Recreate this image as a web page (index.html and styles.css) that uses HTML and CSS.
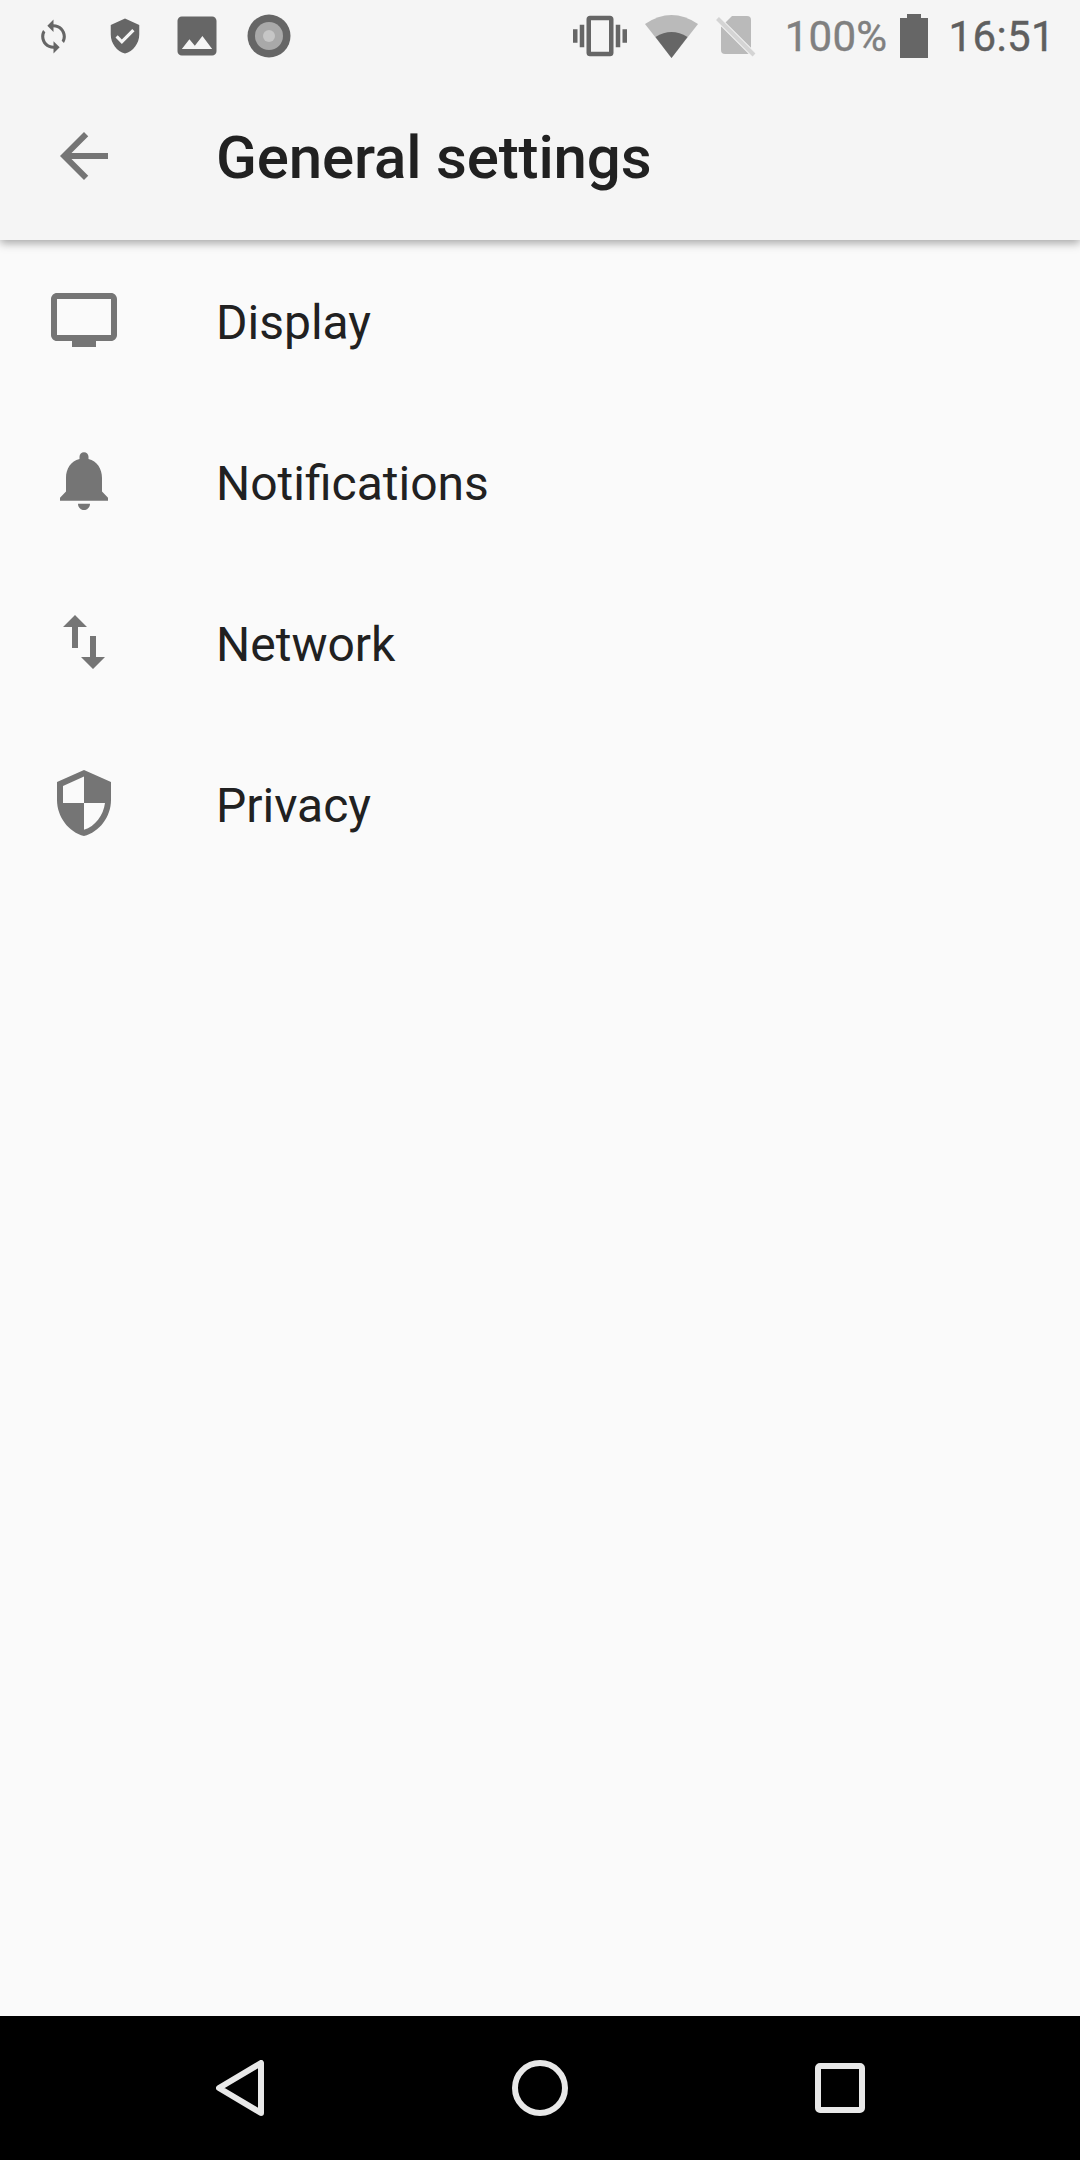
FILE: index.html
```html
<!DOCTYPE html>
<html lang="en">
<head>
    <meta charset="UTF-8">
    <meta name="viewport" content="width=device-width, initial-scale=1.0">
    <title>General settings</title>
    <link rel="stylesheet" href="styles.css">
</head>
<body>
    <div class="phone">
        <div class="appbar">
            <!-- Status bar -->
            <div class="status-bar">
                <div class="status-left">
                    <div class="status-slot">
                        <svg class="sb-sync" viewBox="0 0 24 24"><path d="M12 4V1L8 5l4 4V6c3.31 0 6 2.69 6 6 0 1.01-.25 1.97-.7 2.8l1.46 1.46C19.54 15.03 20 13.57 20 12c0-4.42-3.58-8-8-8zm0 14c-3.31 0-6-2.69-6-6 0-1.01.25-1.97.7-2.8L5.24 7.74C4.46 8.97 4 10.43 4 12c0 4.42 3.58 8 8 8v3l4-4-4-4v3z"/></svg>
                    </div>
                    <div class="status-slot">
                        <svg class="sb-shield" viewBox="0 0 24 24"><path d="M12 1L3 5v6c0 5.55 3.84 10.74 9 12 5.16-1.26 9-6.45 9-12V5l-9-4zm-2 16l-4-4 1.41-1.41L10 14.17l6.59-6.59L18 9l-8 8z"/></svg>
                    </div>
                    <div class="status-slot">
                        <svg class="sb-photo" viewBox="0 0 24 24"><path d="M21 19V5c0-1.1-.9-2-2-2H5c-1.1 0-2 .9-2 2v14c0 1.1.9 2 2 2h14c1.1 0 2-.9 2-2zM8.5 13.5l2.5 3.01L14.5 12l4.5 6H5l3.5-4.5z"/></svg>
                    </div>
                    <div class="status-slot">
                        <svg class="sb-record" viewBox="0 0 44 44">
                            <circle cx="22" cy="22" r="21.5" fill="#666666"/>
                            <circle cx="22" cy="22" r="14" fill="#a9a9a9"/>
                            <circle cx="22" cy="22" r="6" fill="#c6c6c6"/>
                        </svg>
                    </div>
                </div>
                <div class="status-right">
                    <svg class="sb-vibrate" viewBox="0 0 24 24"><path d="M0 15h2V9H0v6zm3 2h2V7H3v10zm19-8v6h2V9h-2zm-3 8h2V7h-2v10zM16.5 3h-9C6.67 3 6 3.67 6 4.5v15c0 .83.67 1.5 1.5 1.5h9c.83 0 1.5-.67 1.5-1.5v-15c0-.83-.67-1.5-1.5-1.5zM16 19H8V5h8v14z"/></svg>
                    <svg class="sb-wifi" viewBox="0 0 53 43">
                        <path d="M0 9Q26.5 -9 53 9L26.5 43Z" fill="#bababa"/>
                        <path d="M10.5 22Q26.5 12 42.5 22L26.5 43Z" fill="#666666"/>
                    </svg>
                    <svg class="sb-sim" viewBox="0 0 40 41">
                        <path d="M16 0H31q4 0 4 4V34q0 4-4 4H9q-4 0-4-4V11Z" fill="#bababa"/>
                        <path d="M1.500 2.500L38 39" stroke="#f5f5f5" stroke-width="6"/>
                        <path d="M1.500 2.500L38 39" stroke="#d4d4d4" stroke-width="4"/>
                    </svg>
                    <span class="sb-percent">100%</span>
                    <svg class="sb-battery" viewBox="0 0 28 44"><path d="M7 0H21V4H28V44H0V4H7Z"/></svg>
                    <span class="sb-clock">16:51</span>
                </div>
            </div>

            <!-- Toolbar -->
            <div class="toolbar">
                <svg class="icon" viewBox="0 0 24 24"><path d="M20 11H7.830l5.590-5.590L12 4l-8 8 8 8 1.410-1.410L7.830 13H20v-2z"/></svg>
                <h1 class="toolbar-title">General settings</h1>
            </div>
        </div>

        <div class="settings-list">
            <div class="settings-row">
                <svg class="icon" viewBox="0 0 24 24"><path d="M21 3H3c-1.100 0-2 .9-2 2v12c0 1.100.9 2 2 2h5v2h8v-2h5c1.100 0 2-.9 2-2V5c0-1.100-.9-2-2-2zm0 14H3V5h18v12z"/></svg>
                <span class="row-label">Display</span>
            </div>
            <div class="settings-row">
                <svg class="icon" viewBox="0 0 24 24"><path d="M12 21.700c1.100 0 2-.9 2-2.100h-4c0 1.200.9 2.100 2 2.100zM18 15.500V11c0-3.070-1.640-5.640-4.500-6.320V3.900c0-.83-.67-1.500-1.500-1.500s-1.500.67-1.500 1.500v.78C7.630 5.360 6 7.920 6 11v4.500l-2 2.100v1h16v-1l-2-2.100z"/></svg>
                <span class="row-label">Notifications</span>
            </div>
            <div class="settings-row">
                <svg class="icon" viewBox="0 0 24 24"><path d="M16 17.010V10h-2v7.010h-3L15 21l4-3.990h-3zM9 3L5 6.990h3V14h2V6.990h3L9 3z"/></svg>
                <span class="row-label">Network</span>
            </div>
            <div class="settings-row">
                <svg class="icon" viewBox="0 0 24 24"><path d="M12 1L3 5v6c0 5.550 3.840 10.740 9 12 5.160-1.260 9-6.450 9-12V5l-9-4zm0 10.990h7c-.53 4.120-3.280 7.790-7 8.940V12H5V6.300l7-3.110v8.800z"/></svg>
                <span class="row-label">Privacy</span>
            </div>
        </div>

        <!-- Navigation bar -->
        <div class="nav-bar">
            <div class="nav-slot">
                <svg class="nav-back" viewBox="0 0 48 56"><path d="M45 3V53L3 28Z"/></svg>
            </div>
            <div class="nav-slot">
                <svg class="nav-home" viewBox="0 0 56 56"><circle cx="28" cy="28" r="25"/></svg>
            </div>
            <div class="nav-slot">
                <svg class="nav-recent" viewBox="0 0 50 50"><rect x="3" y="3" width="44" height="44" rx="2"/></svg>
            </div>
        </div>
    </div>
</body>
</html>
```

FILE: styles.css
```css
* {
    margin: 0;
    padding: 0;
    box-sizing: border-box;
}

body {
    font-family: 'Roboto', sans-serif;
    background: #fafafa;
}

.phone {
    width: 1080px;
    height: 2160px;
    display: flex;
    flex-direction: column;
    overflow: hidden;
}

.appbar {
    position: relative;
    z-index: 1;
    background: #f5f5f5;
    box-shadow: 0 3px 9px rgba(0, 0, 0, 0.35);
}

.status-bar {
    height: 72px;
    display: flex;
    justify-content: space-between;
    align-items: center;
    padding: 0 25px 0 17px;
    fill: #666666;
}

.status-left {
    display: flex;
    align-items: center;
}

.status-slot {
    width: 72px;
    height: 72px;
    display: flex;
    align-items: center;
    justify-content: center;
}

.sb-sync {
    width: 37px;
    height: 37px;
}

.sb-shield {
    width: 38px;
    height: 38px;
}

.sb-photo {
    width: 52px;
    height: 52px;
}

.sb-record {
    width: 44px;
    height: 44px;
}

.status-right {
    display: flex;
    align-items: center;
}

.sb-vibrate {
    width: 54px;
    height: 54px;
    margin-right: 18px;
}

.sb-wifi {
    width: 53px;
    height: 43px;
    margin-right: 18px;
}

.sb-sim {
    width: 40px;
    height: 41px;
    margin-right: 29px;
}

.sb-percent {
    font-size: 42px;
    letter-spacing: 0.3px;
    color: #808080;
    -webkit-text-stroke: 0.4px #808080;
    margin-right: 13px;
}

.sb-battery {
    width: 28px;
    height: 44px;
    margin-right: 20px;
}

.sb-clock {
    font-size: 42px;
    letter-spacing: 0.4px;
    color: #5f5f5f;
    -webkit-text-stroke: 0.4px #5f5f5f;
}

.toolbar {
    height: 168px;
    display: flex;
    align-items: flex-start;
    padding: 48px 0 0 48px;
}

.icon {
    width: 72px;
    height: 72px;
    flex-shrink: 0;
    fill: #757575;
}

.toolbar-title {
    font-size: 60px;
    font-weight: 500;
    line-height: 72px;
    letter-spacing: -0.15px;
    color: #212121;
    margin: 2px 0 0 96px;
}

.settings-list {
    flex: 1;
    padding-top: 1px;
}

.settings-row {
    height: 161px;
    display: flex;
    align-items: center;
    padding-left: 48px;
}

.settings-row .icon {
    margin-bottom: 3px;
}

.row-label {
    font-size: 48px;
    color: #212121;
    margin: 2px 0 0 96px;
}

.nav-bar {
    height: 144px;
    background: #000000;
    display: flex;
    padding: 0 90px;
}

.nav-slot {
    flex: 1;
    display: flex;
    align-items: center;
    justify-content: center;
}

.nav-bar svg {
    fill: none;
    stroke: #e8e8e8;
    stroke-width: 6;
    stroke-linejoin: round;
}

.nav-back {
    width: 48px;
    height: 56px;
}

.nav-home {
    width: 56px;
    height: 56px;
}

.nav-recent {
    width: 50px;
    height: 50px;
}
```
